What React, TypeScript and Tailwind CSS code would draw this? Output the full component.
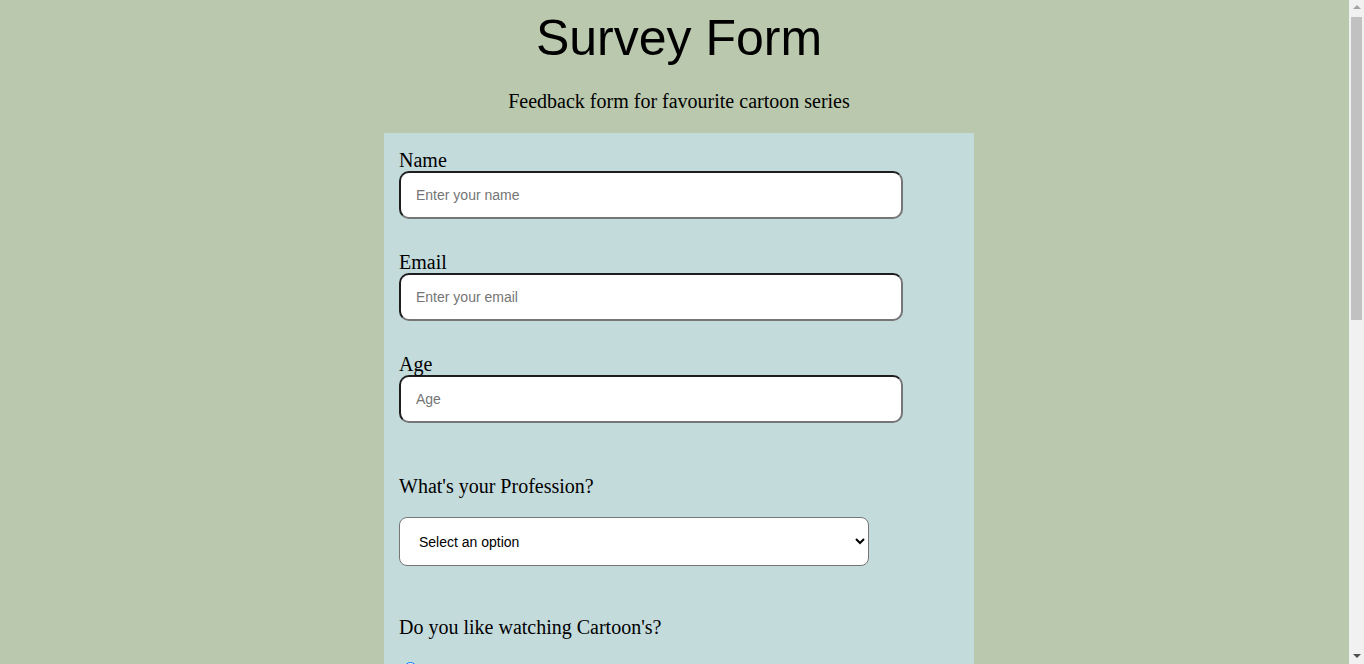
import React from "react";

const inputCls =
  "block w-[504px] h-[48px] rounded-[10px] border-2 border-t-[#1e1e1e] border-l-[#1e1e1e] border-r-[#767676] border-b-[#767676] bg-white pl-[15px] font-['Liberation_Sans',Arial,sans-serif] text-[14px] text-black placeholder:text-[#757575] outline-none";

function Row({ type, name, label, checked }: { type: string; name: string; label: string; checked?: boolean }) {
  return (
    <label className="flex items-start gap-[6px]">
      <input
        type={type}
        name={name}
        defaultChecked={checked}
        className="ml-[5px] mt-[3px] w-[13px] h-[13px] shrink-0 accent-[#0075ff]"
      />
      <span className="mt-[6px] text-[18px] leading-[21px]">{label}</span>
    </label>
  );
}

export default function App() {
  return (
    <div className="min-h-screen bg-[#bac8ae] font-['Liberation_Serif','Times_New_Roman',serif] text-black">
      <div className="w-[1349px] pl-[9px] flex flex-col items-center">
        <h1 className="mt-[10px] font-['Liberation_Sans',Arial,sans-serif] text-[50px] leading-[57px] font-normal">
          Survey Form
        </h1>
        <p className="mt-[23px] text-[20px] leading-[23px]">
          Feedback form for favourite cartoon series
        </p>
        <form className="mt-[20px] w-[590px] bg-[#c4dbdc] pt-[16px] pl-[15px] pb-[40px]">
          <label className="block text-[20px] leading-[22px]" htmlFor="name">
            Name
          </label>
          <input id="name" type="text" placeholder="Enter your name" className={inputCls} />
          <label className="mt-[32px] block text-[20px] leading-[22px]" htmlFor="email">
            Email
          </label>
          <input id="email" type="email" placeholder="Enter your email" className={inputCls} />
          <label className="mt-[32px] block text-[20px] leading-[22px]" htmlFor="age">
            Age
          </label>
          <input id="age" type="number" placeholder="Age" className={inputCls} />

          <p className="mt-[52px] text-[20px] leading-[23px]">What's your Profession?</p>
          <select
            defaultValue=""
            className="mt-[19px] block w-[470px] h-[49px] rounded-[8px] border border-[#767676] bg-white pl-[15px] pr-[6px] font-['Liberation_Sans',Arial,sans-serif] text-[14px] text-black"
          >
            <option value="" disabled>
              Select an option
            </option>
            <option>Student</option>
            <option>Full time job</option>
            <option>Part time job</option>
            <option>Other</option>
          </select>

          <p className="mt-[50px] text-[20px] leading-[23px]">Do you like watching Cartoon's?</p>
          <div className="mt-[20px] flex flex-col gap-[10px]">
            <Row type="radio" name="like" label="Yes" checked />
            <Row type="radio" name="like" label="No" />
            <Row type="radio" name="like" label="Sometimes" />
          </div>

          <p className="mt-[50px] text-[20px] leading-[23px]">Which cartoons do you like? (Check all that apply)</p>
          <div className="mt-[20px] flex flex-col gap-[10px]">
            {["Tom and Jerry", "Doraemon", "Shinchan", "Pokemon", "Ben 10", "Oggy and the Cockroaches"].map((c) => (
              <Row key={c} type="checkbox" name={c} label={c} />
            ))}
          </div>

          <p className="mt-[50px] text-[20px] leading-[23px]">Any comments or suggestions?</p>
          <textarea
            placeholder="Enter your comment here..."
            className="mt-[20px] block w-[504px] h-[120px] rounded-[10px] border-2 border-[#767676] bg-white p-[15px] font-['Liberation_Sans',Arial,sans-serif] text-[14px] placeholder:text-[#757575]"
          />
          <button
            type="button"
            className="mt-[30px] block w-[504px] h-[48px] rounded-[10px] bg-[#4a7c59] font-['Liberation_Sans',Arial,sans-serif] text-[18px] text-white"
          >
            Submit
          </button>
        </form>
        <div className="h-[20px]" />
      </div>

      {/* browser scrollbar */}
      <div className="fixed right-0 top-0 flex h-screen w-[15px] flex-col items-center bg-[#f1f1f1]">
        <div className="mt-[5px] h-0 w-0 border-x-[4px] border-b-[4px] border-x-transparent border-b-[#a3a3a3]" />
        <div className="mt-[8px] h-[303px] w-[11px] bg-[#c1c1c1]" />
        <div className="flex-1" />
        <div className="mb-[6px] h-0 w-0 border-x-[4px] border-t-[4px] border-x-transparent border-t-[#505050]" />
      </div>
    </div>
  );
}
